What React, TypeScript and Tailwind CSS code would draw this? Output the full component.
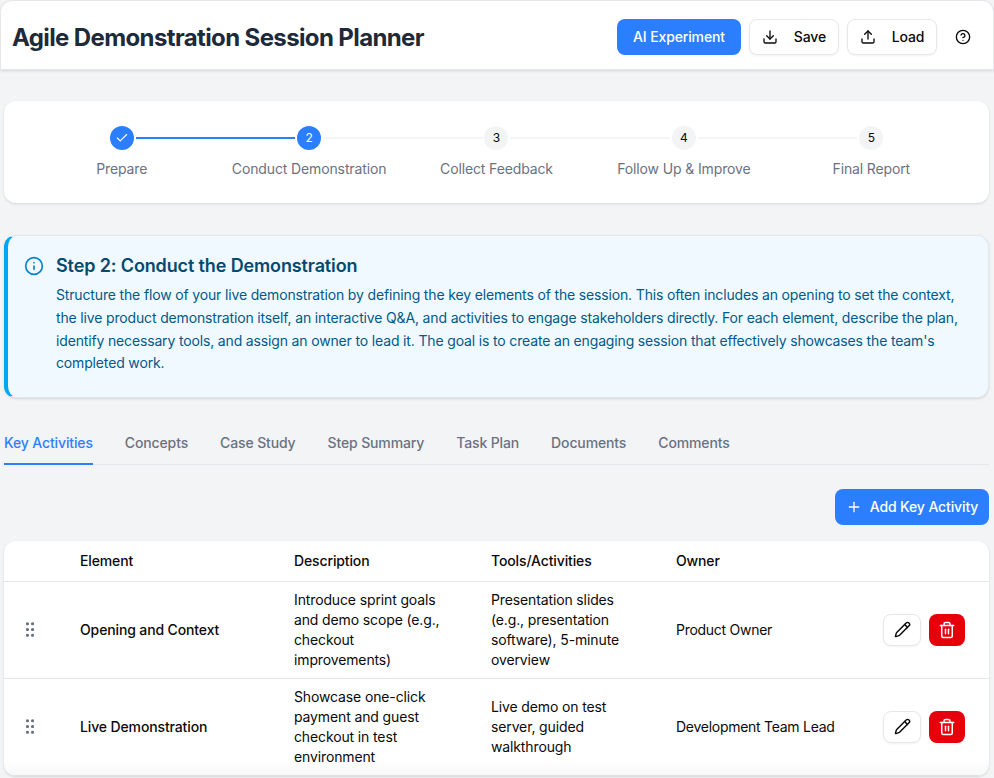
import { Check, Download, Upload, CircleHelp, Info, Pencil, Trash2, Plus } from "lucide-react";

const steps = ["Prepare", "Conduct Demonstration", "Collect Feedback", "Follow Up & Improve", "Final Report"];
const tabs = ["Key Activities", "Concepts", "Case Study", "Step Summary", "Task Plan", "Documents", "Comments"];
const rows = [
  {
    el: "Opening and Context",
    desc: ["Introduce sprint goals", "and demo scope (e.g.,", "checkout", "improvements)"],
    tools: ["Presentation slides", "(e.g., presentation", "software), 5-minute", "overview"],
    owner: "Product Owner",
  },
  {
    el: "Live Demonstration",
    desc: ["Showcase one-click", "payment and guest", "checkout in test", "environment"],
    tools: ["Live demo on test", "server, guided", "walkthrough"],
    owner: "Development Team Lead",
  },
];

function Grip() {
  return (
    <svg width="8" height="15" viewBox="0 0 8 15" className="text-gray-500" fill="currentColor">
      <circle cx="1.5" cy="1.75" r="1.6" />
      <circle cx="6.5" cy="1.75" r="1.6" />
      <circle cx="1.5" cy="7.5" r="1.6" />
      <circle cx="6.5" cy="7.5" r="1.6" />
      <circle cx="1.5" cy="13.25" r="1.6" />
      <circle cx="6.5" cy="13.25" r="1.6" />
    </svg>
  );
}

export default function App() {
  return (
    <div className="h-[778px] w-[994px] overflow-hidden bg-[#f3f4f6] font-['Inter',sans-serif] tracking-[-0.13px] text-[#0a0a0a]">
      <header className="flex h-[70px] items-center justify-between rounded-t-xl border border-[#e5e7eb] bg-white pl-[11px] pr-3 pt-1 shadow-sm">
        <h1 className="pt-0.5 text-2xl font-bold tracking-[-0.62px] text-[#1e2939]">Agile Demonstration Session Planner</h1>
        <div className="flex items-center">
          <button className="mr-2 flex h-9 w-[124px] items-center justify-center rounded-lg bg-blue-500 text-sm font-medium text-white">AI Experiment</button>
          <button className="mr-2 flex h-9 w-[90px] items-center justify-center gap-4 rounded-lg border border-[#e5e7eb] bg-white text-sm font-medium shadow-xs">
            <Download size={16} /> Save
          </button>
          <button className="mr-2 flex h-9 w-[90px] items-center justify-center gap-4 rounded-lg border border-[#e5e7eb] bg-white text-sm font-medium shadow-xs">
            <Upload size={16} /> Load
          </button>
          <button className="flex h-9 w-9 items-center justify-center">
            <CircleHelp size={16} />
          </button>
        </div>
      </header>

      <main className="pl-1 pr-[5px] pt-[31px]">
        <section className="grid h-[102px] grid-cols-5 rounded-xl bg-white px-6 pt-[25px] shadow-sm">
          {steps.map((s, i) => (
            <div key={s} className="relative flex flex-col items-center">
              {i < 4 && (
                <div className={`absolute left-[calc(50%+14px)] right-[calc(-50%+14px)] top-[11px] h-0.5 ${i === 0 ? "bg-blue-500" : "bg-gray-100"}`} />
              )}
              <div
                className={`flex h-6 w-6 items-center justify-center rounded-full text-xs ${
                  i < 2 ? "bg-blue-500 text-white" : "bg-gray-100 text-[#0a0a0a]"
                }`}
              >
                {i === 0 ? <Check size={14} /> : i + 1}
              </div>
              <div className="mt-[9px] text-sm leading-5 text-gray-500">{s}</div>
            </div>
          ))}
        </section>

        <section className="mt-8 flex h-[163px] gap-3 rounded-xl border border-l-4 border-[#e5e7eb] border-l-sky-500 bg-sky-50 pl-4 pr-4 pt-[19px] shadow-sm">
          <Info size={20} className="mt-px shrink-0 text-sky-600" />
          <div>
            <h2 className="text-lg font-semibold leading-[22px] text-[#024a70]">Step 2: Conduct the Demonstration</h2>
            <p className="mt-[7px] text-sm leading-[22.75px] tracking-[-0.155px] text-[#00598a]">
              Structure the flow of your live demonstration by defining the key elements of the session. This often includes an opening to set the context, the live product demonstration itself, an interactive Q&amp;A, and activities to engage stakeholders directly. For each element, describe the plan, identify necessary tools, and assign an owner to lead it. The goal is to create an engaging session that effectively showcases the team's completed work.
            </p>
          </div>
        </section>

        <nav className="mt-[23px] flex h-11 gap-8 border-b border-[#e5e7eb] text-sm font-medium text-gray-500">
          {tabs.map((t, i) => (
            <div key={t} className={`flex h-11 items-center border-b-2 pt-px ${i === 0 ? "border-blue-500 text-blue-500" : "border-transparent"}`}>{t}</div>
          ))}
        </nav>

        <div className="mt-6 flex justify-end">
          <button className="flex h-9 w-[154px] items-center justify-center gap-2 rounded-lg bg-blue-500 text-sm font-medium text-white">
            <Plus size={16} /> Add Key Activity
          </button>
        </div>

        <section className="relative mt-4 overflow-hidden rounded-xl bg-white shadow-sm">
          <table className="w-full table-fixed border-collapse text-left text-sm leading-5">
            <colgroup>
              <col className="w-[60px]" />
              <col className="w-[214px]" />
              <col className="w-[197px]" />
              <col className="w-[185px]" />
              <col />
            </colgroup>
            <thead>
              <tr className="h-10 border-b border-[#e5e7eb]">
                <th />
                <th className="px-4 font-medium">Element</th>
                <th className="px-4 font-medium">Description</th>
                <th className="px-4 font-medium">Tools/Activities</th>
                <th className="px-4 font-medium">Owner</th>
              </tr>
            </thead>
            <tbody>
              {rows.map((r) => (
                <tr key={r.el} className="h-[97px] border-b border-[#e5e7eb]">
                  <td>
                    <div className="flex justify-center pr-2">
                      <Grip />
                    </div>
                  </td>
                  <td className="px-4 font-medium">{r.el}</td>
                  <td className="px-4">{r.desc.map((l) => <div key={l}>{l}</div>)}</td>
                  <td className="px-4">{r.tools.map((l) => <div key={l}>{l}</div>)}</td>
                  <td className="px-4">
                    <div className="flex items-center justify-between pr-2">
                      <span className="tracking-[-0.27px]">{r.owner}</span>
                      <span className="flex gap-2">
                        <button className="flex h-8 w-[38px] items-center justify-center rounded-lg border border-[#e5e7eb] bg-white shadow-xs">
                          <Pencil size={17} />
                        </button>
                        <button className="flex h-8 w-9 items-center justify-center rounded-lg bg-red-600 text-white">
                          <Trash2 size={18} />
                        </button>
                      </span>
                    </div>
                  </td>
                </tr>
              ))}
            </tbody>
          </table>
          <div className="pointer-events-none absolute inset-x-0 bottom-0 h-4 bg-gradient-to-t from-black/[0.03] to-transparent" />
        </section>
      </main>
    </div>
  );
}
